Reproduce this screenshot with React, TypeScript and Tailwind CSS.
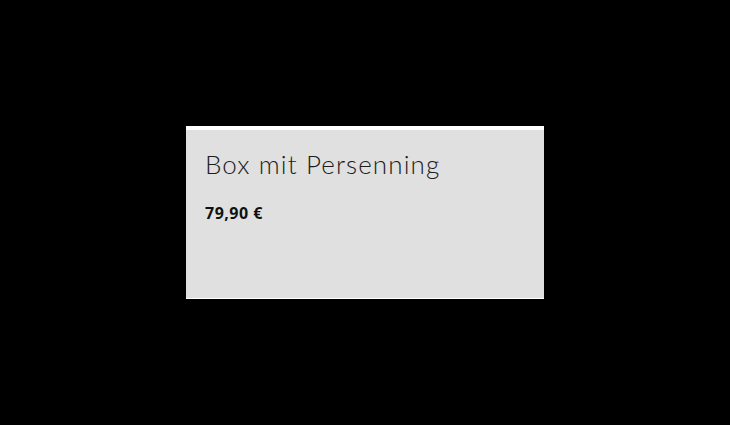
export default function App() {
  return (
    <div className="flex h-[425px] w-full items-center justify-center bg-black">
      {/* Produktkarte */}
      <div className="flex h-[173px] w-[358px] flex-col border-t-4 border-b border-white bg-[#e0e0e0] px-[19px] pt-[18px]">
        <h2 className="font-['Lato',sans-serif] text-[26px] font-light leading-[32px] tracking-[1.1px] text-[#1c1c1c]">
          Box mit Persenning
        </h2>
        <p className="mt-[23px] font-['Open_Sans',sans-serif] text-[16px] font-bold leading-5 tracking-[0.5px] text-[#111]">
          79,90 €
        </p>
      </div>
    </div>
  );
}
